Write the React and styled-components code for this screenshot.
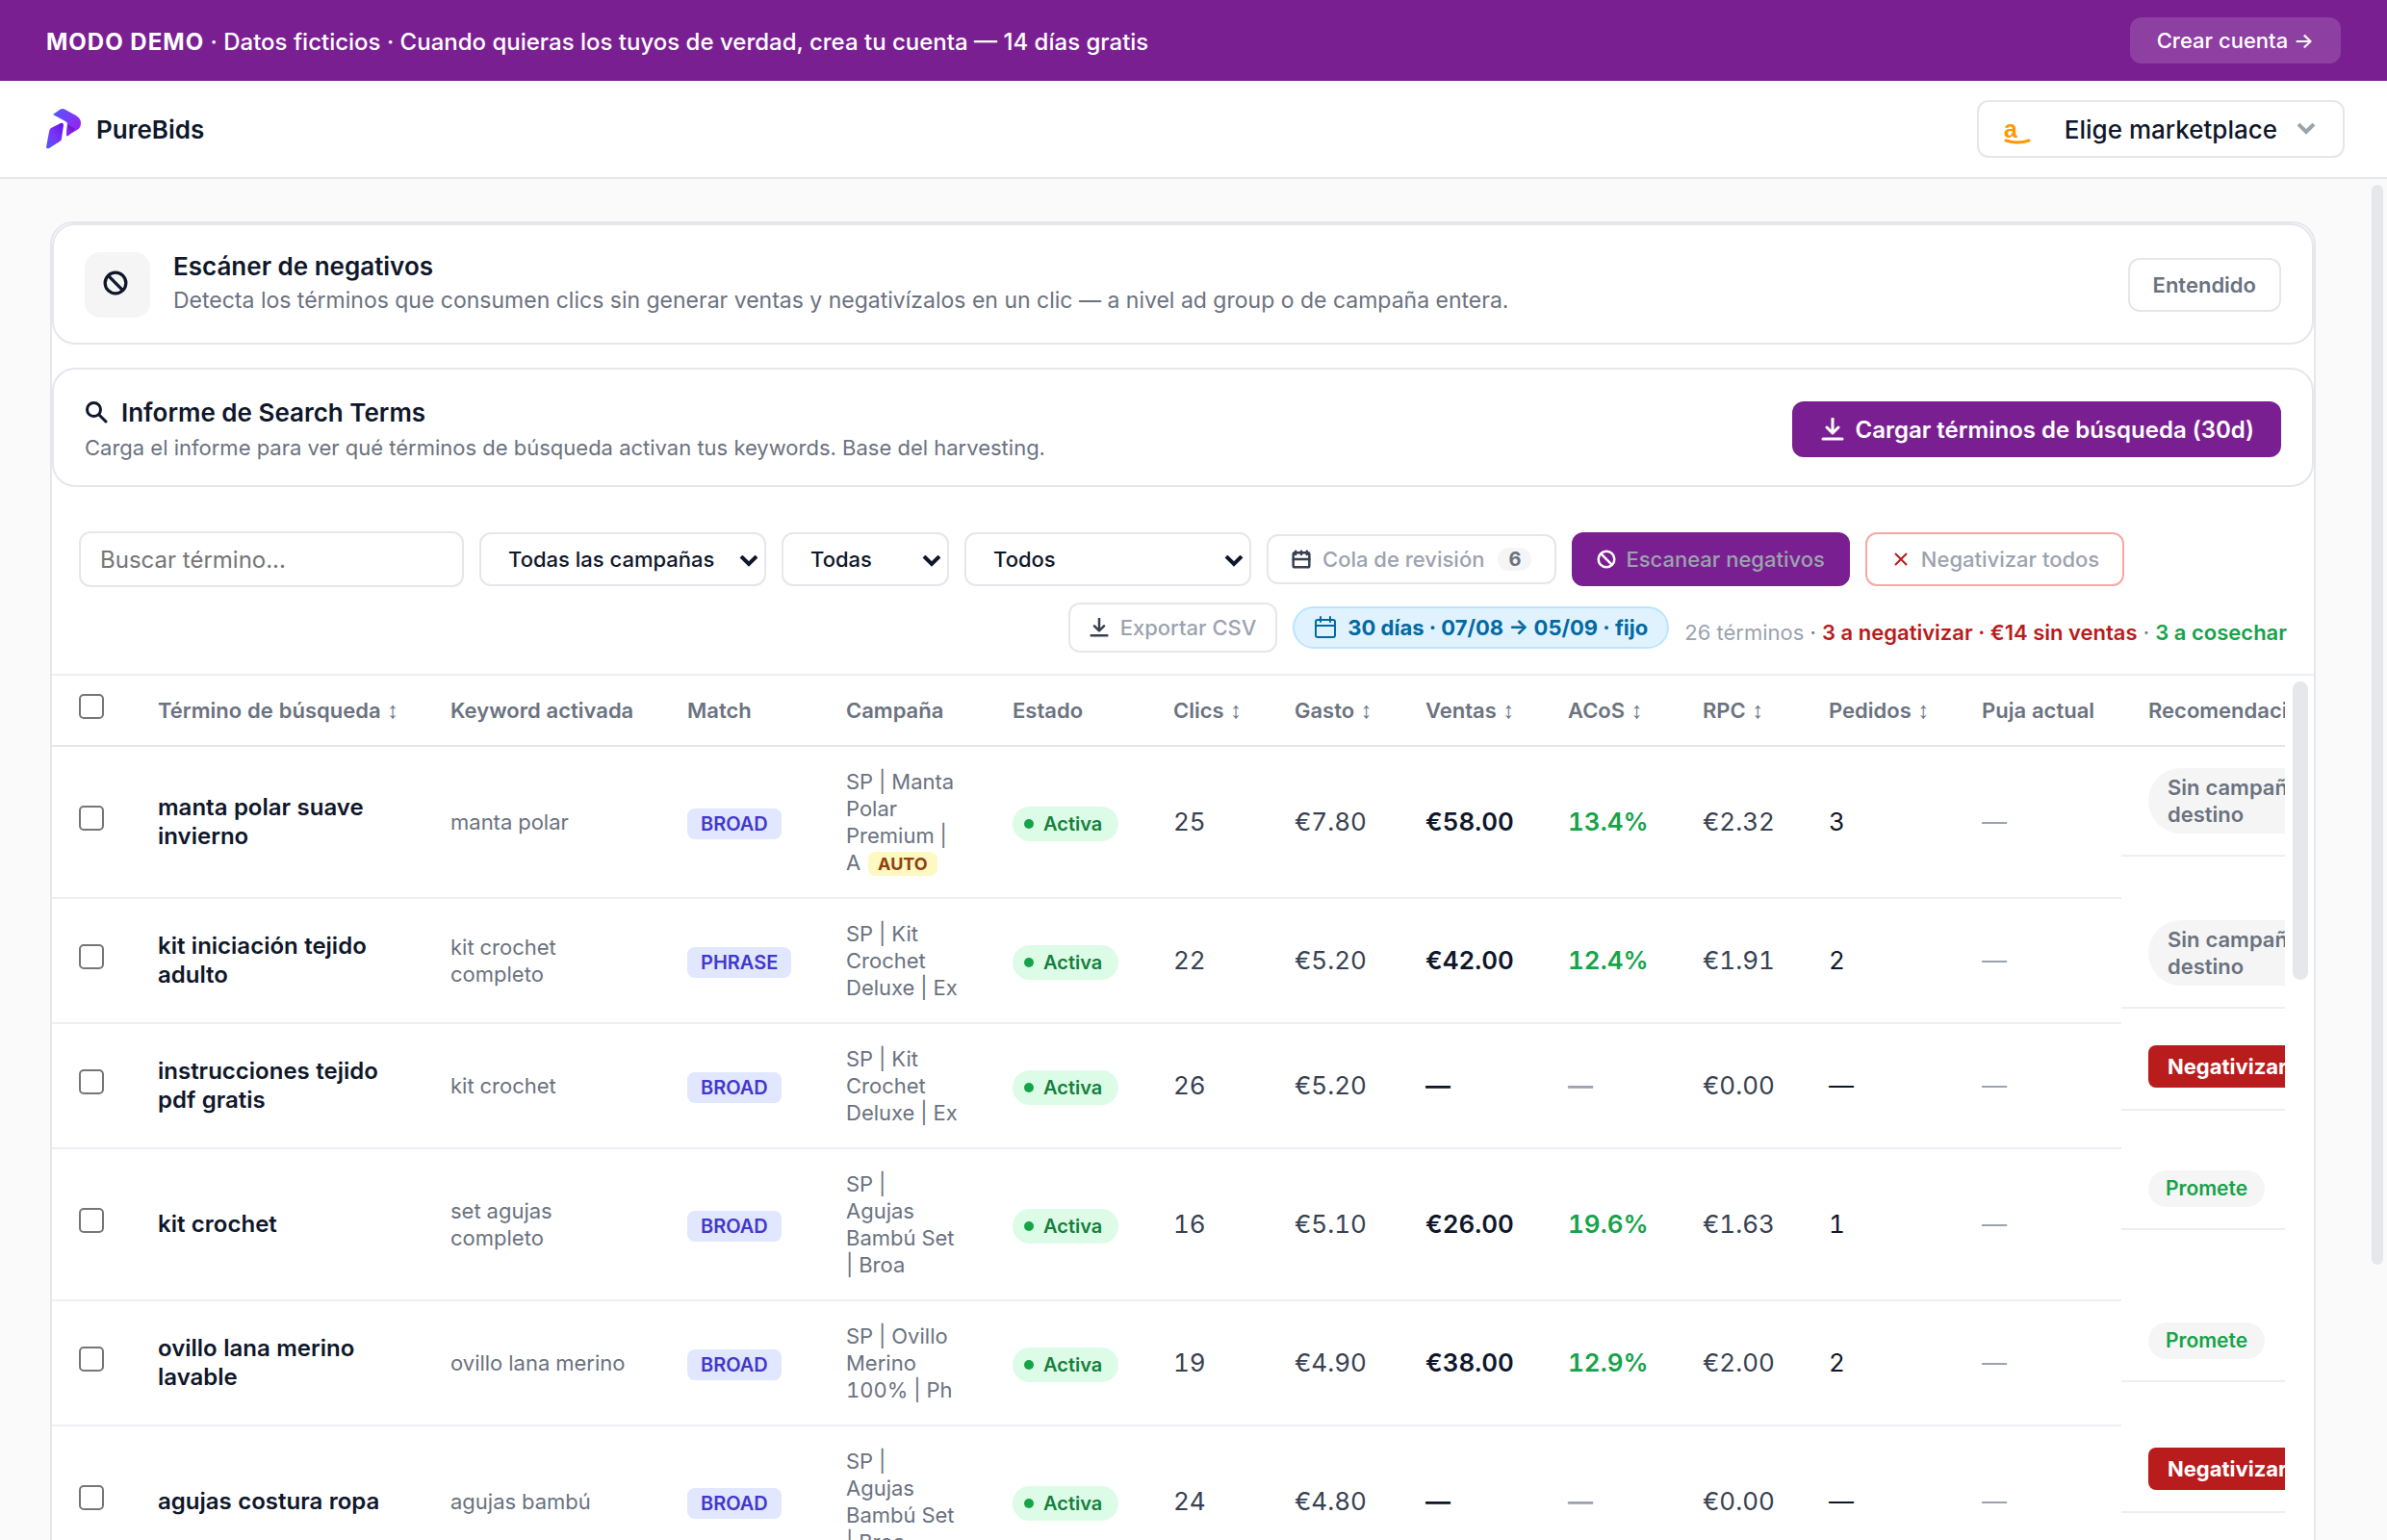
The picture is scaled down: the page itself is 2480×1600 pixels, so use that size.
import React from 'react'
import styled, { createGlobalStyle, css } from 'styled-components'

const rows = [
  { term: 'manta polar suave invierno', keyword: 'manta polar', match: 'BROAD', campaign: 'SP | Manta Polar Premium | A', auto: true, clicks: 25, spend: '€7.80', sales: '€58.00', acos: '13.4%', rpc: '€2.32', orders: 3, advice: 'none' },
  { term: 'kit iniciación tejido adulto', keyword: 'kit crochet completo', match: 'PHRASE', campaign: 'SP | Kit Crochet Deluxe | Ex', clicks: 22, spend: '€5.20', sales: '€42.00', acos: '12.4%', rpc: '€1.91', orders: 2, advice: 'none' },
  { term: 'instrucciones tejido pdf gratis', keyword: 'kit crochet', match: 'BROAD', campaign: 'SP | Kit Crochet Deluxe | Ex', clicks: 26, spend: '€5.20', rpc: '€0.00', advice: 'negate' },
  { term: 'kit crochet', keyword: 'set agujas completo', match: 'BROAD', campaign: 'SP | Agujas Bambú Set | Broa', clicks: 16, spend: '€5.10', sales: '€26.00', acos: '19.6%', rpc: '€1.63', orders: 1, advice: 'promising' },
  { term: 'ovillo lana merino lavable', keyword: 'ovillo lana merino', match: 'BROAD', campaign: 'SP | Ovillo Merino 100% | Ph', clicks: 19, spend: '€4.90', sales: '€38.00', acos: '12.9%', rpc: '€2.00', orders: 2, advice: 'promising' },
  { term: 'agujas costura ropa', keyword: 'agujas bambú', match: 'BROAD', campaign: 'SP | Agujas Bambú Set | Broa', clicks: 24, spend: '€4.80', rpc: '€0.00', advice: 'negate' },
]

const columns = [
  { label: 'Término de búsqueda', width: 304, sort: true },
  { label: 'Keyword activada', width: 246 },
  { label: 'Match', width: 165 },
  { label: 'Campaña', width: 173 },
  { label: 'Estado', width: 167 },
  { label: 'Clics', width: 126, sort: true },
  { label: 'Gasto', width: 136, sort: true },
  { label: 'Ventas', width: 148, sort: true },
  { label: 'ACoS', width: 140, sort: true },
  { label: 'RPC', width: 131, sort: true },
  { label: 'Pedidos', width: 159, sort: true },
  { label: 'Puja actual', width: 173 },
  { label: 'Recomendación', width: 250 },
]

function Ban({ size }) {
  return (
    <svg width={size} height={size} viewBox="0 0 24 24" fill="none" stroke="currentColor" strokeWidth="3" aria-hidden="true">
      <circle cx="12" cy="12" r="10" />
      <path d="M5 5l14 14" />
    </svg>
  )
}

function Search() {
  return (
    <svg width="24" height="24" viewBox="0 0 24 24" fill="none" stroke="currentColor" strokeWidth="3" strokeLinecap="round" aria-hidden="true">
      <circle cx="9.500" cy="8.500" r="7" />
      <path d="M15 14l7 7" />
    </svg>
  )
}

function Download({ size }) {
  return (
    <svg width={size} height={size} viewBox="0 0 24 24" fill="none" stroke="currentColor" strokeWidth="3" strokeLinecap="round" strokeLinejoin="round" aria-hidden="true">
      <path d="M12 1v14M6 10l6 6 6-6M2 22h20" />
    </svg>
  )
}

function Calendar({ size, bold }) {
  return (
    <svg width={size} height={size} viewBox="0 0 24 24" fill="none" stroke="currentColor" strokeWidth={bold ? 3 : 2} strokeLinecap="round" strokeLinejoin="round" aria-hidden="true">
      <rect x="2" y="4" width="20" height="18" rx="2" />
      <path d={bold ? 'M2 12h20M5 2v4M12 2v4M19 2v4' : 'M2 10h20M7 1v5M17 1v5'} />
    </svg>
  )
}

function Chevron() {
  return (
    <svg width="20" height="12" viewBox="0 0 20 12" fill="none" stroke="currentColor" strokeWidth="4" aria-hidden="true">
      <path d="M2 1l8 8 8-8" />
    </svg>
  )
}

function Logo() {
  return (
    <svg width="37" height="44" viewBox="0 0 37 44" aria-hidden="true">
      <defs>
        <linearGradient id="wing" x1="0" y1="0" x2="1" y2="0.7">
          <stop offset="0" stopColor="#4a5cff" />
          <stop offset="0.6" stopColor="#7c3af5" />
          <stop offset="1" stopColor="#9a1ef0" />
        </linearGradient>
        <linearGradient id="fold" x1="1" y1="0" x2="0" y2="1">
          <stop offset="0" stopColor="#5b0fc4" />
          <stop offset="1" stopColor="#9a2cf5" />
        </linearGradient>
        <linearGradient id="leg" x1="1" y1="0" x2="0" y2="1">
          <stop offset="0" stopColor="#5a12e8" />
          <stop offset="0.5" stopColor="#7a34f5" />
          <stop offset="1" stopColor="#4a5cff" />
        </linearGradient>
      </defs>
      <path d="M7 7L14 2Q17 0 20 2L31 8Q36 11 36 16Q36 21 32 23L22 29Q21 30 21 28L22 17Q22 15 20 14Z" fill="url(#wing)" />
      <path d="M22 17L30 22L23 29Q21 30 21 28Z" fill="url(#fold)" />
      <path d="M3 25Q3 23 5 21L15 16Q18 15 18 18L16 32Q16 34 14 35L3 42Q0 43 0 41Z" fill="url(#leg)" />
    </svg>
  )
}

function Amazon() {
  return (
    <svg width="28" height="32" viewBox="0 0 28 32" aria-hidden="true">
      <text x="0" y="25" fontFamily="'Liberation Sans', Arial, sans-serif" fontSize="25" fontWeight="700" fill="#ff9900">a</text>
      <path d="M2 28Q14 32 26 28" fill="none" stroke="#ff9900" strokeWidth="3" strokeLinecap="round" />
    </svg>
  )
}

function Advice({ kind }) {
  if (kind === 'negate') return <NegateButton>Negativizar</NegateButton>
  if (kind === 'promising') return <Promising>Promete</Promising>
  return <NoTarget>Sin campaña destino</NoTarget>
}

function Picker({ label, option, width }) {
  return (
    <SelectBox $width={width}>
      <select aria-label={label}>
        <option>{option}</option>
      </select>
      <Chevron />
    </SelectBox>
  )
}

export default function App() {
  return (
    <Page>
      <GlobalStyle />
      <DemoBar>
        <p><strong>MODO DEMO</strong> · Datos ficticios · Cuando quieras los tuyos de verdad, crea tu cuenta — 14 días gratis</p>
        <SignUp href="#crear-cuenta">Crear cuenta →</SignUp>
      </DemoBar>
      <Header>
        <Brand href="#inicio"><Logo />PureBids</Brand>
        <Marketplace>
          <Amazon />
          <span>Elige marketplace</span>
          <Chevron />
        </Marketplace>
      </Header>
      <Main>
        <Content>
          <Panel>
            <IntroCard>
              <IconBox><Ban size={26} /></IconBox>
              <IntroText>
                <h2>Escáner de negativos</h2>
                <p>Detecta los términos que consumen clics sin generar ventas y negativízalos en un clic — a nivel ad group o de campaña entera.</p>
              </IntroText>
              <DismissButton>Entendido</DismissButton>
            </IntroCard>
            <ReportCard>
              <ReportText>
                <h2><Search />Informe de Search Terms</h2>
                <p>Carga el informe para ver qué términos de búsqueda activan tus keywords. Base del harvesting.</p>
              </ReportText>
              <LoadButton><Download size={24} />Cargar términos de búsqueda (30d)</LoadButton>
            </ReportCard>
            <Toolbar>
              <SearchInput type="text" placeholder="Buscar término..." aria-label="Buscar término" />
              <Picker label="Campaña" option="Todas las campañas" width={298} />
              <Picker label="Match" option="Todas" width={174} />
              <Picker label="Recomendación" option="Todos" width={298} />
              <ToolButton disabled>
                <Calendar size={20} bold /><span>Cola de revisión</span><Count>6</Count>
              </ToolButton>
              <ScanButton disabled><Ban size={20} /><span>Escanear negativos</span></ScanButton>
              <NegateAllButton disabled>
                <svg width="14" height="14" viewBox="0 0 14 14" fill="none" stroke="currentColor" strokeWidth="2" aria-hidden="true">
                  <path d="M1 1l12 12M13 1L1 13" />
                </svg>
                <span>Negativizar todos</span>
              </NegateAllButton>
              <ExportButton disabled><Download size={20} /><span>Exportar CSV</span></ExportButton>
              <RangePill><Calendar size={24} />30 días · 07/08 → 05/09 · fijo</RangePill>
              <Summary>26 términos <i>·</i> <Red>3 a negativizar · €14 sin ventas</Red> <i>·</i> <Green>3 a cosechar</Green></Summary>
            </Toolbar>
            <TableArea>
              <TableView>
                <Table>
                  <colgroup>
                    <col width="82" />
                    {columns.map((c) => <col key={c.label} width={c.width} />)}
                  </colgroup>
                  <thead>
                    <tr>
                      <CheckCell as="th"><Checkbox type="checkbox" aria-label="Seleccionar todos" /></CheckCell>
                      {columns.map((c) => (
                        <th key={c.label}>{c.label}{c.sort && <Sort> ↕</Sort>}</th>
                      ))}
                    </tr>
                  </thead>
                  <tbody>
                    {rows.map((r) => (
                      <tr key={r.term}>
                        <CheckCell><Checkbox type="checkbox" aria-label={r.term} /></CheckCell>
                        <TermCell>{r.term}</TermCell>
                        <td>{r.keyword}</td>
                        <BadgeCell><Match>{r.match}</Match></BadgeCell>
                        <td>{r.campaign}{r.auto && <> <Auto>AUTO</Auto></>}</td>
                        <BadgeCell><Status>Activa</Status></BadgeCell>
                        <NumberCell>{r.clicks}</NumberCell>
                        <NumberCell>{r.spend}</NumberCell>
                        <NumberCell $strong $color="#0f172a">{r.sales || '—'}</NumberCell>
                        <NumberCell $strong $color={r.acos ? '#16a34a' : '#9ca3af'}>{r.acos || '—'}</NumberCell>
                        <NumberCell>{r.rpc}</NumberCell>
                        <NumberCell $color="#0f172a">{r.orders || '—'}</NumberCell>
                        <NumberCell $color="#9ca3af">—</NumberCell>
                        <AdviceCell><Advice kind={r.advice} /></AdviceCell>
                      </tr>
                    ))}
                  </tbody>
                </Table>
              </TableView>
              <TableScroll><Thumb $width={16} $height="310px" /></TableScroll>
            </TableArea>
          </Panel>
        </Content>
        <PageScroll><Thumb $width={12} $height="80%" /></PageScroll>
      </Main>
    </Page>
  )
}

const GlobalStyle = createGlobalStyle`
  * {
    box-sizing: border-box;
  }

  body {
    margin: 0;
    font-family: Inter, "Liberation Sans", sans-serif;
    color: #0f172a;
    background-color: #fafafa;
  }

  h2, p {
    margin: 0;
  }

  button, input, select {
    font-family: inherit;
  }
`

const Page = styled.div`
  height: 100vh;
  display: flex;
  flex-direction: column;
  overflow: hidden;
`

const DemoBar = styled.div`
  display: flex;
  justify-content: space-between;
  align-items: center;
  padding: 18px 48px;
  background-color: #7a1f92;
  color: white;
  font-size: 24px;
  line-height: 30px;
  font-weight: 500;

  p {
    padding-top: 3px;
  }

  strong {
    font-weight: 700;
    letter-spacing: 1px;
  }
`

const SignUp = styled.a`
  height: 48px;
  padding: 0 28px;
  display: flex;
  align-items: center;
  border-radius: 12px;
  background-color: rgba(255, 255, 255, 0.15);
  color: white;
  font-size: 22px;
  text-decoration: none;
`

const Header = styled.header`
  display: flex;
  justify-content: space-between;
  align-items: center;
  padding: 20px 44px 20px 48px;
  background-color: white;
  border-bottom: 2px solid #e5e7eb;
`

const Brand = styled.a`
  display: flex;
  align-items: center;
  gap: 15px;
  color: #0f172a;
  font-size: 26px;
  font-weight: 600;
  text-decoration: none;
`

const Marketplace = styled.button`
  height: 60px;
  display: flex;
  align-items: center;
  padding: 0 28px 0 26px;
  border: 2px solid #e5e7eb;
  border-radius: 12px;
  background-color: white;
  color: #0f172a;
  font-size: 26px;
  font-weight: 500;

  span {
    margin: 0 20px 0 35px;
  }

  svg:last-child {
    color: #9ca3af;
  }
`

const Main = styled.main`
  flex: 1;
  min-height: 0;
  display: flex;
`

const Content = styled.div`
  flex: 1;
  min-width: 0;
  padding: 44px 52px;
  overflow: hidden;
`

const Panel = styled.section`
  border: 2px solid #e5e7eb;
  border-radius: 24px;
  background-color: white;
`

const cardStyle = css`
  display: flex;
  align-items: center;
  border: 2px solid #e5e7eb;
  border-radius: 24px;
  background-color: white;
`

const IntroCard = styled.div`
  ${cardStyle}
  padding: 28px 32px 26px;
  gap: 24px;
`

const ReportCard = styled.div`
  ${cardStyle}
  margin: 24px 0;
  padding: 28px 32px 24px;
`

const IconBox = styled.div`
  height: 68px;
  width: 68px;
  display: flex;
  justify-content: center;
  align-items: center;
  padding: 0 4px 4px 0;
  border-radius: 16px;
  background-color: #f5f5f5;
`

const CardText = styled.div`
  flex: 1;
  display: flex;
  flex-direction: column;

  h2 {
    display: flex;
    align-items: center;
    gap: 14px;
    font-size: 26px;
    font-weight: 600;
  }

  p {
    color: #6b7280;
  }
`

const IntroText = styled(CardText)`
  gap: 2px;

  h2 {
    line-height: 30px;
  }

  p {
    font-size: 23px;
    line-height: 36px;
  }
`

const ReportText = styled(CardText)`
  gap: 4px;

  h2 {
    line-height: 34px;
  }

  p {
    font-size: 22px;
    line-height: 30px;
  }
`

const DismissButton = styled.button`
  height: 56px;
  padding: 0 24px;
  border: 2px solid #e5e7eb;
  border-radius: 12px;
  background-color: white;
  color: #6b7280;
  font-size: 22px;
  font-weight: 600;
`

const LoadButton = styled.button`
  height: 58px;
  display: flex;
  align-items: center;
  gap: 12px;
  padding: 0 28px 0 30px;
  border: none;
  border-radius: 12px;
  background-color: #7a1f92;
  color: white;
  font-size: 24px;
  font-weight: 600;
`

const Toolbar = styled.div`
  display: flex;
  flex-wrap: wrap;
  align-items: center;
  gap: 16px;
  padding: 22px 28px;
  border-bottom: 2px solid #eeeef3;
`

const SearchInput = styled.input`
  height: 58px;
  width: 400px;
  padding: 0 20px;
  border: 2px solid #e5e7eb;
  border-radius: 12px;
  font-size: 24px;

  &::placeholder {
    color: #757575;
  }
`

const SelectBox = styled.div`
  position: relative;
  width: ${(props) => props.$width}px;
  color: #0f172a;

  select {
    appearance: none;
    height: 56px;
    width: 100%;
    padding: 0 28px;
    border: 2px solid #e5e7eb;
    border-radius: 12px;
    background-color: white;
    color: inherit;
    font-size: 22px;
    font-weight: 500;
  }

  svg {
    position: absolute;
    top: 24px;
    right: 8px;
    pointer-events: none;
  }
`

const ToolButton = styled.button`
  height: 52px;
  display: flex;
  align-items: center;
  gap: 12px;
  padding: 0 24px;
  border: 2px solid #e5e7eb;
  border-radius: 12px;
  background-color: white;
  color: #374151;
  font-size: 22px;
  font-weight: 500;

  span {
    color: #9ca3af;
  }
`

const ScanButton = styled(ToolButton)`
  height: 56px;
  gap: 10px;
  border-color: #7a1f92;
  background-color: #7a1f92;
  color: white;
`

const NegateAllButton = styled(ToolButton)`
  height: 56px;
  gap: 14px;
  padding: 0 24px 0 28px;
  border-color: #fca5a5;
  color: #b91c1c;
`

const ExportButton = styled(ToolButton)`
  margin-left: auto;
  padding: 0 20px;
`

const Count = styled.b`
  height: 24px;
  padding: 0 11px;
  margin-left: 2px;
  border-radius: 12px;
  background-color: #f5f5f5;
  color: #6b7280;
  font-size: 20px;
  line-height: 24px;
  font-weight: 700;
`

const RangePill = styled.div`
  height: 44px;
  display: flex;
  align-items: center;
  gap: 11px;
  padding: 0 20px;
  border: 2px solid #bae6fd;
  border-radius: 22px;
  background-color: #e0f2fe;
  color: #0369a1;
  font-size: 22px;
  font-weight: 700;
`

const Summary = styled.p`
  padding-top: 10px;
  color: #9ca3af;
  font-size: 22px;

  i {
    color: #6b7280;
    font-style: normal;
  }
`

const Red = styled.strong`
  color: #b91c1c;
  font-weight: 600;
`

const Green = styled.strong`
  color: #16a34a;
  font-weight: 600;
`

const TableArea = styled.div`
  display: flex;
`

const TableView = styled.div`
  flex: 1;
  min-width: 0;
  overflow: hidden;
`

const Table = styled.table`
  width: 100%;
  min-width: 2400px;
  table-layout: fixed;
  border-collapse: separate;
  border-spacing: 0;
  font-size: 22px;
  line-height: 28px;
  font-variant-numeric: tabular-nums;
  text-align: left;

  th, td {
    padding: 22px 28px;
  }

  th {
    border-bottom: 2px solid #e5e7eb;
    color: #6b7280;
    font-weight: 600;
    white-space: nowrap;
  }

  td {
    border-bottom: 2px solid #eeeef3;
    color: #6b7280;
  }
`

const Sort = styled.span`
  font-family: "Liberation Sans", sans-serif;
  font-size: 24px;
  line-height: 24px;
  font-weight: 400;
`

const CheckCell = styled.td`
  && {
    padding: 18px 28px 26px;
  }
`

const BadgeCell = styled.td`
  && {
    padding: 24px 28px 20px;
  }
`

const Checkbox = styled.input`
  appearance: none;
  display: block;
  height: 26px;
  width: 26px;
  margin: 0;
  border: 2px solid #767676;
  border-radius: 5px;
  background-color: white;

  &:checked {
    background-color: #7a1f92;
  }
`

const TermCell = styled.td`
  && {
    color: #0f172a;
    font-size: 24px;
    line-height: 30px;
    font-weight: 600;
  }
`

const NumberCell = styled.td`
  && {
    color: ${(props) => props.$color || '#374151'};
    font-size: 26px;
    line-height: 30px;
    font-weight: ${(props) => (props.$strong ? 600 : 400)};
  }
`

const AdviceCell = styled.td`
  display: flex;
`

const Match = styled.span`
  display: inline-block;
  padding: 2px 14px;
  border-radius: 8px;
  background-color: #e0e7ff;
  color: #4338ca;
  font-size: 20px;
  font-weight: 600;
`

const Auto = styled.span`
  padding: 2px 10px;
  margin-left: 2px;
  border-radius: 8px;
  background-color: #fef9c3;
  color: #92400e;
  font-size: 18px;
  line-height: 18px;
  font-weight: 700;
`

const Status = styled.span`
  display: inline-flex;
  align-items: center;
  height: 36px;
  gap: 10px;
  padding: 0 17px 0 12px;
  border-radius: 18px;
  background-color: #dcfce7;
  color: #15803d;
  font-size: 20px;
  font-weight: 600;
  vertical-align: middle;

  &::before {
    content: "";
    height: 10px;
    width: 10px;
    border-radius: 5px;
    background-color: #16a34a;
  }
`

const NoTarget = styled.span`
  padding: 6px 20px;
  border-radius: 34px;
  background-color: #f5f5f5;
  color: #6b7280;
  font-weight: 600;
`

const Promising = styled.span`
  padding: 0 18px;
  border-radius: 19px;
  background-color: #f5f5f5;
  color: #16a34a;
  font-size: 21px;
  line-height: 38px;
  font-weight: 600;
`

const NegateButton = styled.button`
  height: 44px;
  padding: 0 20px;
  border: none;
  border-radius: 8px;
  background-color: #b91c1c;
  color: white;
  font-size: 22px;
  font-weight: 700;
`

const TableScroll = styled.div`
  padding: 6px 6px 6px 8px;
`

const PageScroll = styled.div`
  padding: 6px 4px 6px 6px;
`

const Thumb = styled.div`
  height: ${(props) => props.$height};
  width: ${(props) => props.$width}px;
  border-radius: 8px;
  background-color: #e5e7eb;
`
